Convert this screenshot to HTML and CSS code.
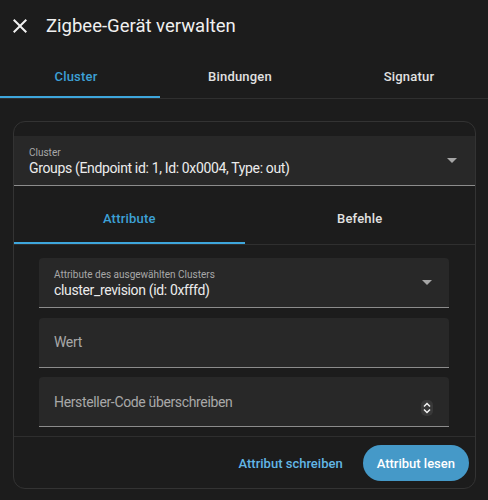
FILE: index.html
```html
<!DOCTYPE html>
<html lang="de">
<head>
  <meta charset="UTF-8" />
  <meta name="viewport" content="width=device-width, initial-scale=1.0" />
  <title>Zigbee-Gerät verwalten</title>
  <link rel="stylesheet" href="styles.css">
</head>
<body>

  <!-- Dialog Header -->
  <header class="dialog-header">
    <button class="close-btn" aria-label="Schließen">
      <svg viewBox="0 0 24 24" width="24" height="24">
        <path d="M19 6.41 17.59 5 12 10.59 6.41 5 5 6.41 10.59 12 5 17.59 6.41 19 12 13.41 17.59 19 19 17.59 13.41 12z" fill="currentColor"/>
      </svg>
    </button>
    <h1>Zigbee-Gerät verwalten</h1>
  </header>

  <!-- Main Tabs -->
  <nav class="tabs main-tabs">
    <a class="tab tab-first active">Cluster</a>
    <a class="tab">Bindungen</a>
    <a class="tab tab-last">Signatur</a>
  </nav>

  <!-- Cluster Card -->
  <div class="card">
    <div class="card-body">
      <div class="select cluster-select">
        <div class="field-text">
          <span class="field-label">Cluster</span>
          <span class="field-value">Groups (Endpoint id: 1, Id: 0x0004, Type: out)</span>
        </div>
        <span class="arrow"></span>
      </div>

      <nav class="tabs inner-tabs">
        <a class="tab active">Attribute</a>
        <a class="tab">Befehle</a>
      </nav>

      <div class="attr-form">
        <div class="select field">
          <div class="field-text">
            <span class="field-label">Attribute des ausgewählten Clusters</span>
            <span class="field-value">cluster_revision (id: 0xfffd)</span>
          </div>
          <span class="arrow"></span>
        </div>

        <div class="field">
          <span class="placeholder">Wert</span>
        </div>

        <div class="field">
          <span class="placeholder">Hersteller-Code überschreiben</span>
          <svg class="spinner" viewBox="0 0 12 16" width="12" height="16">
            <rect x="0" y="0" width="12" height="16" rx="5" fill="#383838"/>
            <path d="M3 6.5 6 3.5 9 6.5" fill="none" stroke="#f2f2f2" stroke-width="1.5"/>
            <path d="M3 9.5 6 12.5 9 9.5" fill="none" stroke="#f2f2f2" stroke-width="1.5"/>
          </svg>
        </div>
      </div>
    </div>

    <div class="card-actions">
      <button class="btn-text">Attribut schreiben</button>
      <button class="btn-filled">Attribut lesen</button>
    </div>
  </div>

</body>
</html>
```

FILE: styles.css
```css
body {
  font-family: Roboto, 'Noto Sans', sans-serif;
  background-color: #1c1c1c;
  color: #e1e1e1;
  margin: 0;
  padding: 0;
}

/* Header */
.dialog-header {
  display: flex;
  align-items: center;
  height: 52px;
  padding-left: 8px;
}
.close-btn {
  display: flex;
  align-items: center;
  justify-content: center;
  width: 24px;
  height: 24px;
  padding: 0;
  border: none;
  background: none;
  color: #f0f0f0;
}
.dialog-header h1 {
  margin: 0 0 0 14px;
  font-size: 18.5px;
  font-weight: 400;
  color: #f0f0f0;
}

/* Tabs */
.tabs {
  display: flex;
  border-bottom: 1px solid #2f2f2f;
}
.tab {
  display: flex;
  align-items: center;
  justify-content: center;
  flex: 1;
  height: 46px;
  font-size: 13px;
  font-weight: 500;
  letter-spacing: 0.2px;
  color: #e1e1e1;
  border-bottom: 2px solid transparent;
}
.tab.active {
  color: #3da0d6;
  border-bottom-color: #3ea6dc;
}
.main-tabs {
  margin-top: 2px;
}
.main-tabs .tab {
  flex: 0 0 160px;
  box-sizing: border-box;
  height: 44px;
  padding-top: 3px;
}
.main-tabs .tab-first {
  padding-right: 8px;
}
.main-tabs .tab-last {
  flex: 1;
  padding-left: 10px;
}

/* Card */
.card {
  margin: 22px 12px 0 13px;
  border: 1px solid #333;
  border-radius: 12px;
  overflow: hidden;
}
.card-body {
  padding-top: 14px;
  border-bottom: 1px solid #2e2e2e;
}

/* Fields */
.select,
.field {
  display: flex;
  align-items: center;
  box-sizing: border-box;
  height: 50px;
  background-color: #282828;
  border-bottom: 1px solid #8c8c8c;
  border-radius: 4px 4px 0 0;
}
.cluster-select {
  padding: 0 18px 0 15px;
  border-radius: 0;
}
.field-text {
  display: flex;
  flex-direction: column;
  flex: 1;
  padding-top: 4px;
}
.field-label {
  font-size: 10px;
  color: #a8a8a8;
  line-height: 12px;
}
.field-value {
  font-size: 14px;
  letter-spacing: -0.35px;
  color: #ececec;
  line-height: 19px;
}
.arrow {
  width: 0;
  height: 0;
  border-left: 5px solid transparent;
  border-right: 5px solid transparent;
  border-top: 5px solid #a6a6a6;
}

.inner-tabs {
  margin-top: 9px;
}
.inner-tabs .tab {
  height: 47px;
}

.attr-form {
  display: flex;
  flex-direction: column;
  gap: 9.5px;
  padding: 13px 26px 9px 25px;
}
.field {
  padding: 0 12px 0 15px;
}
.field .arrow {
  margin-right: 5px;
}
.placeholder {
  flex: 1;
  font-size: 14px;
  letter-spacing: -0.35px;
  color: #a8a8a8;
}
.spinner {
  margin-top: 12px;
  margin-right: 4px;
}

/* Actions */
.card-actions {
  display: flex;
  justify-content: flex-end;
  align-items: center;
  gap: 12px;
  padding: 8px 6px 7px 0;
}
.card-actions button {
  font-family: inherit;
  font-size: 13px;
  font-weight: 500;
  height: 36px;
  border: none;
  border-radius: 18px;
  cursor: pointer;
}
.btn-text {
  background: none;
  color: #62b6e6;
  padding: 0 8px;
}
.btn-filled {
  background-color: #4599c8;
  color: #fff;
  padding: 0 14px;
}
```
